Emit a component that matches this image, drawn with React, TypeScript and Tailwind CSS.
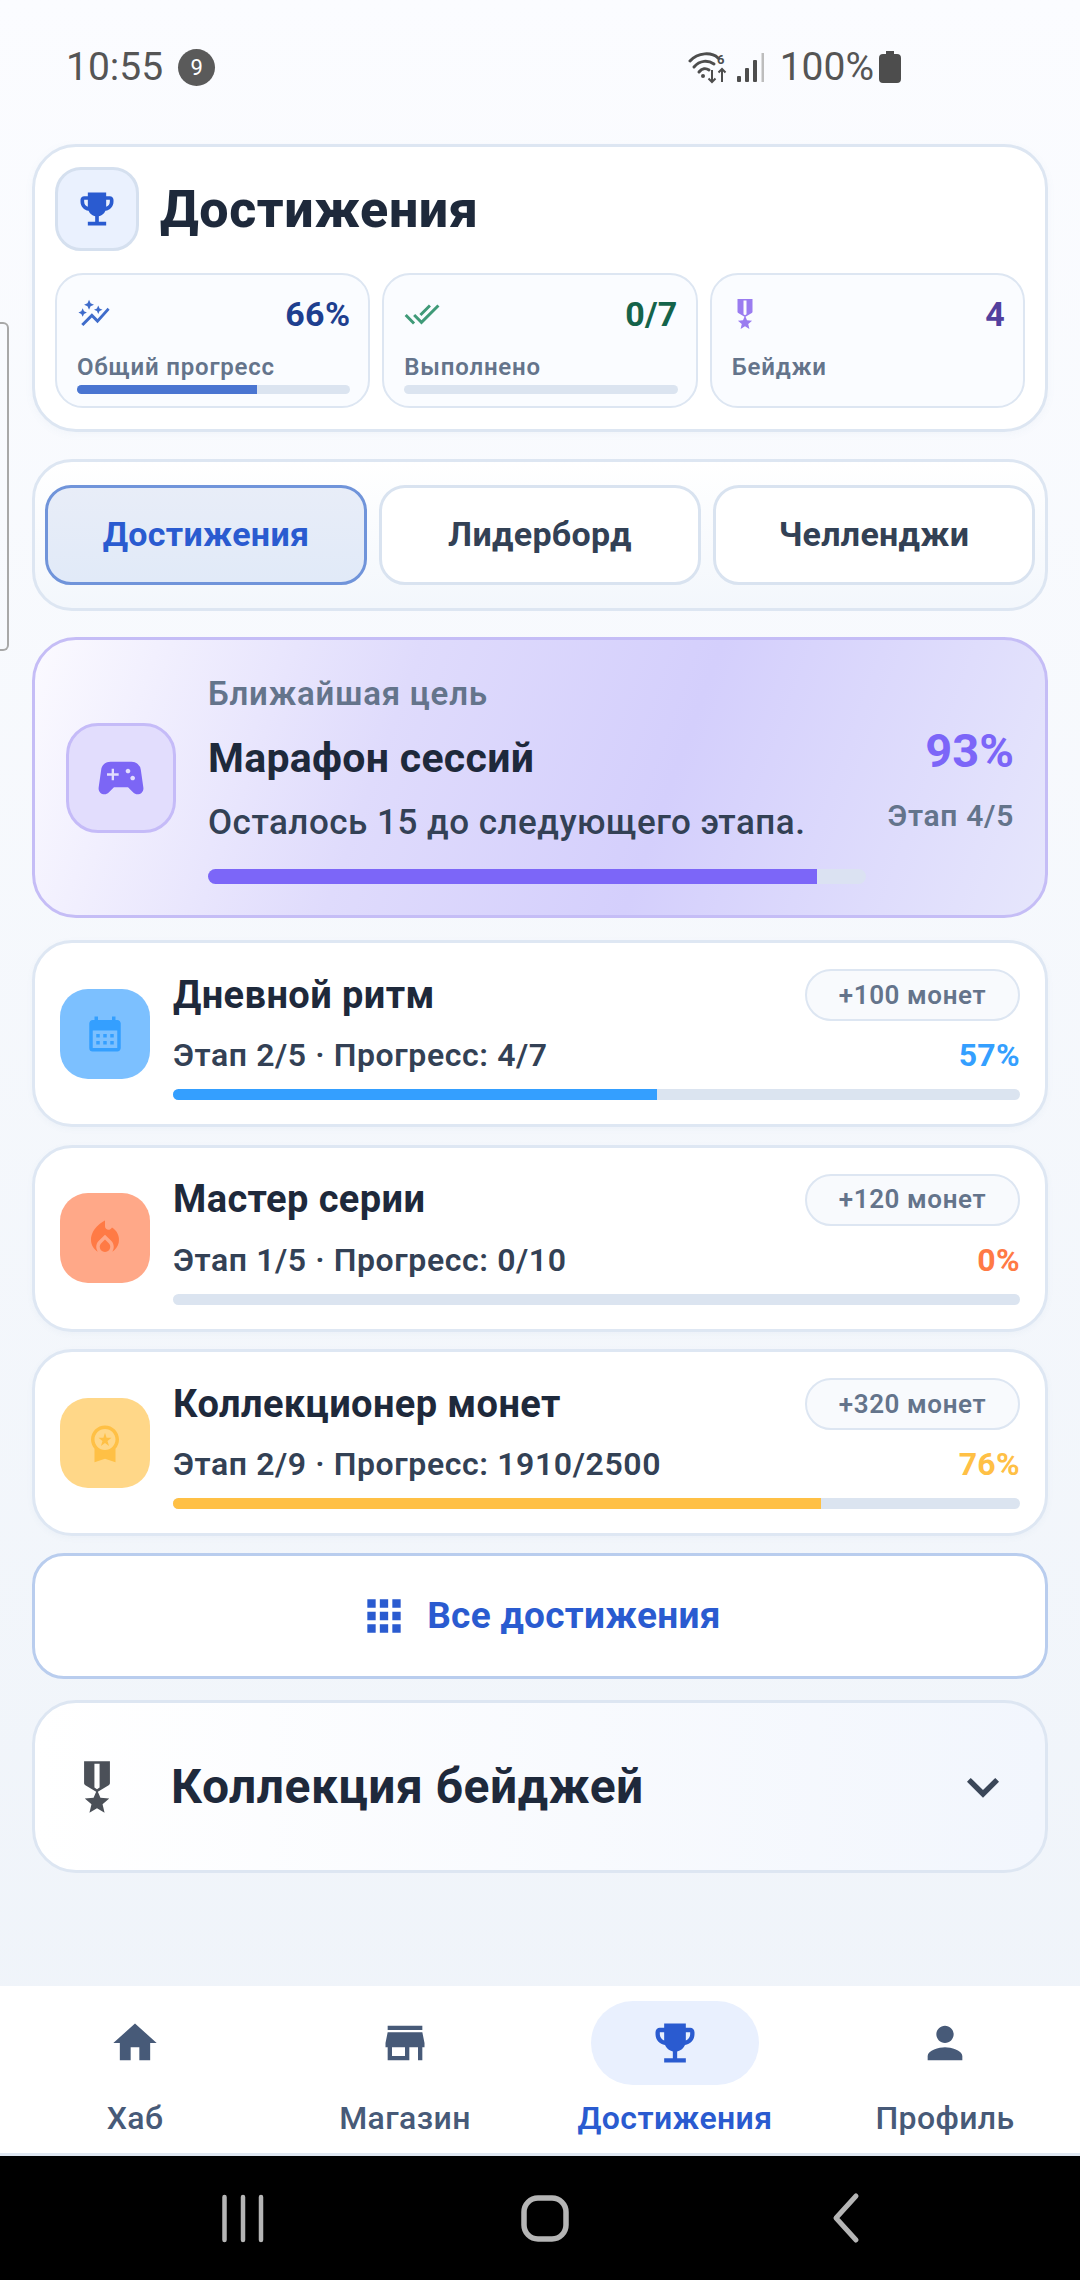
import React from "react";
import {
  MdEmojiEvents, MdAutoGraph, MdDoneAll, MdMilitaryTech, MdSportsEsports, MdCalendarMonth,
  MdLocalFireDepartment, MdWorkspacePremium, MdApps, MdKeyboardArrowDown, MdHome, MdStore, MdPerson,
} from "react-icons/md";

function StatusIcons() {
  return (
    <svg width="78" height="36" viewBox="0 0 78 36" fill="none" className="shrink-0">
      <path d="M2 12 C10 3 24 3 30 9" stroke="#4d4d4d" strokeWidth="3" strokeLinecap="round" />
      <path d="M6 18 C12 11 20 11 26 15" stroke="#4d4d4d" strokeWidth="3" strokeLinecap="round" />
      <path d="M11 23 C14 19 18 19 21 21" stroke="#4d4d4d" strokeWidth="3" strokeLinecap="round" />
      <circle cx="15" cy="27" r="2" fill="#4d4d4d" />
      <text x="29" y="15" fontSize="13" fontWeight="700" fill="#4d4d4d" fontFamily="Roboto">6</text>
      <path d="M24 21 V33 M20.500 29.500 L24 33 L27.500 29.500" stroke="#4d4d4d" strokeWidth="2" />
      <path d="M34 33 V20 M30.500 23.500 L34 20 L37.500 23.500" stroke="#4d4d4d" strokeWidth="2" />
      <rect x="49" y="27" width="4" height="6" rx="1" fill="#4d4d4d" />
      <rect x="57" y="19" width="4" height="14" rx="1" fill="#4d4d4d" />
      <rect x="65" y="11" width="4" height="22" rx="1" fill="#4d4d4d" />
      <rect x="73.500" y="4" width="2.500" height="29" fill="#bdbdbd" />
    </svg>
  );
}

function StatCard({ icon, value, valueCls, label, pct, fill }: { icon: React.ReactNode; value: string; valueCls: string; label: string; pct?: number; fill?: string }) {
  return (
    <div className="flex h-[135px] min-w-0 flex-1 flex-col rounded-[28px] border-2 border-[#dde6f2] bg-[#fafcff] pl-[20px] pr-[18px] pt-[18px]">
      <div className="flex h-[42px] items-center justify-between">
        {icon}
        <span className={`text-[34px] font-bold leading-none tracking-[0.3px] ${valueCls}`}>{value}</span>
      </div>
      <div className="mt-[18px] h-[28px] text-[24px] font-semibold leading-[28px] tracking-[0.8px] text-[#64748b]">{label}</div>
      {pct !== undefined && (
        <div className="mt-[4px] h-[9px] w-full overflow-hidden rounded-full bg-[#dbe4f0]">
          <div className={`h-full ${fill}`} style={{ width: `${pct}%` }} />
        </div>
      )}
    </div>
  );
}

function Tab({ label, active }: { label: string; active?: boolean }) {
  return (
    <div className={`flex h-[100px] flex-1 items-center justify-center rounded-[26px] border-[3px] pb-[2px] text-[34px] font-bold tracking-[0.3px] ${active ? "border-[#7094da] bg-gradient-to-b from-[#e8edf8] to-[#e1eaf8] text-[#2a5bd0]" : "border-[#d9e3f0] bg-white text-[#334155]"}`}>
      {label}
    </div>
  );
}

function Achievement({ icon, iconBg, title, sub, reward, pct, barPct, pctCls, fill }: { icon: React.ReactNode; iconBg: string; title: string; sub: string; reward: string; pct: number; barPct: number; pctCls: string; fill: string }) {
  return (
    <div className="flex h-[187px] items-center gap-[23px] rounded-[40px] border-[3px] border-[#dee7f3] bg-white pl-[25px] pr-[25px] shadow-[0_2px_6px_rgba(100,130,170,0.05)]">
      <div className={`flex h-[90px] w-[90px] shrink-0 items-center justify-center rounded-[28px] ${iconBg}`}>{icon}</div>
      <div className="min-w-0 flex-1 pt-[2px]">
        <div className="flex h-[52px] items-center justify-between">
          <span className="text-[38px] font-bold tracking-[0.4px] text-[#1e293b]">{title}</span>
          <span className="flex h-[52px] w-[215px] items-center justify-center rounded-[26px] border-[2px] border-[#dde6f2] bg-[#f8fafd] text-[26px] font-semibold tracking-[0.6px] text-[#64748b]">{reward}</span>
        </div>
        <div className="mt-[12px] flex h-[44px] items-center justify-between">
          <span className="text-[32px] font-semibold tracking-[0.6px] text-[#334155]">{sub}</span>
          <span className={`text-[32px] font-bold tracking-[0.3px] ${pctCls}`}>{pct}%</span>
        </div>
        <div className="mt-[12px] h-[11px] w-full overflow-hidden rounded-full bg-[#dbe4f0]">
          <div className={`h-full ${fill}`} style={{ width: `${barPct}%` }} />
        </div>
      </div>
    </div>
  );
}

function NavItem({ icon, label, active }: { icon: React.ReactNode; label: string; active?: boolean }) {
  return (
    <div className="flex flex-1 flex-col items-center pt-[15px]">
      <div className={`flex h-[84px] w-[168px] items-center justify-center rounded-[42px] ${active ? "bg-[#e9f0fe] text-[#2a5bd0]" : "text-[#475a78]"}`}>{icon}</div>
      <span className={`mt-[15px] text-[32px] tracking-[0.4px] leading-[36px] ${active ? "font-semibold text-[#2a5bd0]" : "font-medium text-[#475a78]"}`}>{label}</span>
    </div>
  );
}

export default function App() {
  return (
    <div className="relative flex h-[2280px] w-[1080px] flex-col overflow-hidden bg-gradient-to-b from-[#fbfcff] to-[#eef3f9] font-['Roboto','Noto_Sans',sans-serif]">
      {/* edge panel handle */}
      <div className="absolute left-0 top-[322px] h-[329px] w-[9px] rounded-r-[6px] border-y-2 border-r-2 border-[#a8a8a8]" />

      {/* status bar */}
      <div className="flex h-[144px] shrink-0 items-start justify-between pl-[66px] pr-[179px] pt-[46px] text-[#555555]">
        <div className="flex h-[42px] items-center">
          <span className="text-[39px] leading-none">10:55</span>
          <span className="ml-[15px] flex h-[37px] w-[37px] items-center justify-center rounded-full bg-[#5a5a5a] text-[22px] text-white">9</span>
        </div>
        <div className="flex h-[42px] items-center">
          <StatusIcons />
          <span className="ml-[14px] text-[39px] leading-none">100%</span>
          <svg width="22" height="32" viewBox="0 0 22 32" className="ml-[5px]"><path d="M7 0h8v3h3a4 4 0 0 1 4 4v21a4 4 0 0 1-4 4H4a4 4 0 0 1-4-4V7a4 4 0 0 1 4-4h3z" fill="#4d4d4d" /></svg>
        </div>
      </div>

      <main className="flex flex-1 flex-col px-[32px]">
        {/* header card */}
        <section className="h-[288px] rounded-[44px] border-[3px] border-[#dde6f2] bg-white px-[20px] pt-[20px] shadow-[0_2px_8px_rgba(100,130,170,0.05)]">
          <div className="flex h-[84px] items-center gap-[21px]">
            <div className="flex h-[84px] w-[84px] items-center justify-center rounded-[26px] border-[3px] border-[#d5e0ef] bg-[#eaf1fe]">
              <MdEmojiEvents size={44} className="text-[#2a5bd0]" />
            </div>
            <h1 className="pt-[2px] text-[52px] font-extrabold leading-none tracking-[0.6px] text-[#1e293b]">Достижения</h1>
          </div>
          <div className="mt-[22px] flex gap-[12px]">
            <StatCard icon={<MdAutoGraph size={34} className="text-[#3f6ccb]" />} value="66%" valueCls="text-[#1e3f8f]" label="Общий прогресс" pct={66} fill="bg-[#4a75d1]" />
            <StatCard icon={<MdDoneAll size={36} className="text-[#3f9a78]" />} value="0/7" valueCls="text-[#14634a]" label="Выполнено" pct={0} fill="bg-[#3f9a78]" />
            <StatCard icon={<MdMilitaryTech size={36} className="-ml-[5px] text-[#9a7cf0]" />} value="4" valueCls="text-[#52409e]" label="Бейджи" />
          </div>
        </section>

        {/* tabs */}
        <section className="mt-[27px] flex h-[152px] items-center gap-[12px] rounded-[40px] border-[3px] border-[#dde6f2] bg-gradient-to-b from-white to-[#f3f7fc] px-[10px]">
          <Tab label="Достижения" active />
          <Tab label="Лидерборд" />
          <Tab label="Челленджи" />
        </section>

        {/* nearest goal */}
        <section className="mt-[26px] flex h-[281px] items-center rounded-[44px] border-[3px] border-[#c5bdf6] bg-[linear-gradient(110deg,#fbfaff_0%,#dfdbfc_35%,#d4cffc_62%,#e6e6fc_100%)] pl-[31px] pr-[31px]">
          <div className="flex h-[110px] w-[110px] shrink-0 items-center justify-center rounded-[32px] border-[3px] border-[#c5bbf8] bg-[#e2ddfd]">
            <MdSportsEsports size={56} className="text-[#7c66f5]" />
          </div>
          <div className="ml-[32px] w-[658px] shrink-0 pt-[3px]">
            <div className="text-[33px] font-semibold leading-[38px] tracking-[0.8px] text-[#64748b]">Ближайшая цель</div>
            <div className="mt-[22px] text-[41px] font-bold leading-[46px] tracking-[0.3px] text-[#1e293b]">Марафон сессий</div>
            <div className="mt-[21px] text-[35px] font-medium leading-[42px] tracking-[0.5px] text-[#334155]">Осталось 15 до следующего этапа.</div>
            <div className="mt-[25px] h-[15px] w-full overflow-hidden rounded-full bg-[#dbe2f2]">
              <div className="h-full w-[92.6%] bg-[#7c66f8]" />
            </div>
          </div>
          <div className="ml-auto flex flex-col items-end pt-[6px]">
            <span className="text-[47px] font-bold leading-[48px] text-[#7c66f8]">93%</span>
            <span className="mt-[23px] text-[30px] font-semibold leading-[36px] tracking-[0.7px] text-[#64748b]">Этап 4/5</span>
          </div>
        </section>

        {/* achievements */}
        <div className="mt-[22px] flex flex-col gap-[17.5px]">
          <Achievement icon={<MdCalendarMonth size={42} className="text-[#349fff]" />} iconBg="bg-[#7cc0ff]" title="Дневной ритм" sub="Этап 2/5 · Прогресс: 4/7" reward="+100 монет" pct={57} barPct={57.14} pctCls="text-[#349fff]" fill="bg-[#349fff]" />
          <Achievement icon={<MdLocalFireDepartment size={42} className="text-[#ff7a45]" />} iconBg="bg-[#ffa888]" title="Мастер серии" sub="Этап 1/5 · Прогресс: 0/10" reward="+120 монет" pct={0} barPct={0} pctCls="text-[#ff7a45]" fill="bg-[#ff7a45]" />
          <Achievement icon={<MdWorkspacePremium size={42} className="text-[#ffc045]" />} iconBg="bg-[#ffd788]" title="Коллекционер монет" sub="Этап 2/9 · Прогресс: 1910/2500" reward="+320 монет" pct={76} barPct={76.5} pctCls="text-[#ffc045]" fill="bg-[#ffc045]" />
        </div>

        {/* all achievements */}
        <div className="mt-[17px] flex h-[126px] items-center justify-center gap-[18px] rounded-[32px] border-[3px] border-[#b9cdee] bg-white text-[#2a5bd0]">
          <MdApps size={50} />
          <span className="text-[37px] font-bold tracking-[0.3px]">Все достижения</span>
        </div>

        {/* badge collection */}
        <div className="mt-[21px] flex h-[173px] items-center rounded-[44px] border-[3px] border-[#dde6f2] bg-gradient-to-r from-white to-[#f2f6fd] pl-[31px] pr-[30px]">
          <MdMilitaryTech size={62} className="text-[#4b5058]" />
          <span className="ml-[43px] text-[48px] font-bold tracking-[0.5px] text-[#1e293b]">Коллекция бейджей</span>
          <MdKeyboardArrowDown size={64} className="ml-auto text-[#3a4658]" />
        </div>
      </main>

      {/* bottom nav */}
      <nav className="flex h-[170px] shrink-0 border-b-[3px] border-[#dfe7f2] bg-white">
        <NavItem icon={<MdHome size={52} />} label="Хаб" />
        <NavItem icon={<MdStore size={52} />} label="Магазин" />
        <NavItem icon={<MdEmojiEvents size={52} />} label="Достижения" active />
        <NavItem icon={<MdPerson size={52} />} label="Профиль" />
      </nav>

      {/* system bar */}
      <div className="flex h-[124px] shrink-0 items-center bg-black">
        <svg width="1080" height="124" viewBox="0 0 1080 124" fill="none" stroke="#b5b5b5" strokeLinecap="round">
          <path d="M224.500 41 V84 M243 41 V84 M261 41 V84" strokeWidth="4.500" />
          <rect x="524" y="42" width="42" height="41" rx="14" strokeWidth="5.500" />
          <path d="M856 40 L836 62 L856 84" strokeWidth="5" strokeLinejoin="round" />
        </svg>
      </div>
    </div>
  );
}
